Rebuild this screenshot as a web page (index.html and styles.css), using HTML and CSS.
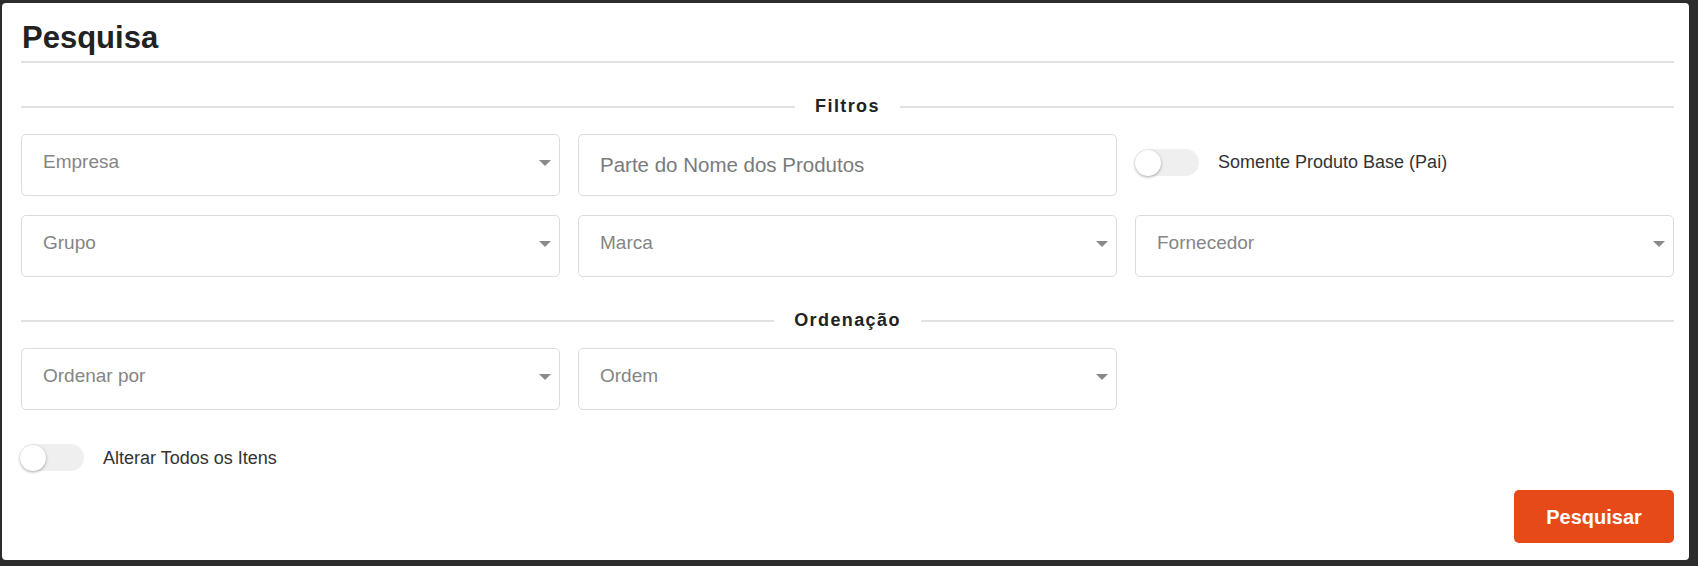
FILE: index.html
```html
<!DOCTYPE html>
<html lang="pt-BR">
<head>
<meta charset="utf-8">
<title>Pesquisa</title>
<link rel="stylesheet" href="styles.css">
</head>
<body>
<div class="card">
  <h1 class="title">Pesquisa</h1>

  <div class="divider"><span>Filtros</span></div>
  <div class="grid">
    <div class="field select"><span class="ph">Empresa</span><span class="caret"></span></div>
    <div class="field text"><span class="ph">Parte do Nome dos Produtos</span></div>
    <div class="switch-field">
      <span class="switch"><span class="knob"></span></span>
      <span class="switch-label">Somente Produto Base (Pai)</span>
    </div>
    <div class="field select"><span class="ph">Grupo</span><span class="caret"></span></div>
    <div class="field select"><span class="ph">Marca</span><span class="caret"></span></div>
    <div class="field select"><span class="ph">Fornecedor</span><span class="caret"></span></div>
  </div>

  <div class="divider"><span>Ordenação</span></div>
  <div class="grid">
    <div class="field select"><span class="ph">Ordenar por</span><span class="caret"></span></div>
    <div class="field select"><span class="ph">Ordem</span><span class="caret"></span></div>
  </div>

  <div class="switch-field standalone">
    <span class="switch"><span class="knob"></span></span>
    <span class="switch-label">Alterar Todos os Itens</span>
  </div>

  <div class="actions">
    <button class="btn-primary" type="button">Pesquisar</button>
  </div>
</div>
</body>
</html>
```

FILE: styles.css
```css
* { box-sizing: border-box; }

html, body {
  margin: 0;
  height: 100%;
}

body {
  background: #2c2c2c;
  padding: 3px 9px 0 2px;
  font-family: "Liberation Sans", Arial, sans-serif;
  color: #333;
}

.card {
  background: #fff;
  border-radius: 4px;
  padding: 15px 15px 17px 19px;
}

.title {
  margin: 0;
  font-size: 31px;
  line-height: 37px;
  font-weight: 700;
  color: #222;
  padding: 1px 0 5px 1px;
  border-bottom: 2px solid #e2e2e2;
}

.divider {
  display: flex;
  align-items: center;
  height: 22px;
  margin: 33px 0 16px;
}

.divider::before,
.divider::after {
  content: "";
  flex: 1;
  height: 2px;
  background: #e2e2e2;
}

.divider span {
  padding: 0 20px 2px;
  font-size: 18px;
  line-height: 22px;
  font-weight: 700;
  letter-spacing: 1.4px;
  color: #222;
}

.grid {
  display: grid;
  grid-template-columns: repeat(3, 1fr);
  column-gap: 18px;
  row-gap: 19px;
}

.field {
  height: 62px;
  border: 1px solid #dcdcdc;
  border-radius: 5px;
  display: flex;
  justify-content: space-between;
  padding: 0 8px 0 21px;
}

.field .ph {
  font-size: 19px;
  line-height: 22px;
  color: #858585;
}

.field.select .ph {
  padding-top: 16px;
}

.field.text {
  align-items: center;
}

.field.text .ph {
  font-size: 20.5px;
  color: #7a7a7a;
}

.caret {
  align-self: center;
  margin-bottom: 4px;
  width: 0;
  height: 0;
  border-left: 6.5px solid transparent;
  border-right: 6.5px solid transparent;
  border-top: 6.5px solid #8a8a8a;
}

.switch-field {
  display: flex;
  align-items: center;
  height: 62px;
  padding-bottom: 5px;
}

.switch {
  width: 64px;
  height: 27px;
  border-radius: 14px;
  background: #efefef;
  display: flex;
  align-items: center;
  flex-shrink: 0;
}

.knob {
  width: 26px;
  height: 26px;
  border-radius: 50%;
  background: #fff;
  box-shadow: 0 1px 3px rgba(0, 0, 0, 0.35);
}

.switch-label {
  margin-left: 19px;
  font-size: 18px;
  color: #333;
}

.switch-field.standalone {
  height: 27px;
  padding: 0;
  margin-top: 34px;
  margin-left: -1px;
}

.switch-field.standalone .switch-label {
  padding-top: 2px;
}

.actions {
  display: flex;
  justify-content: flex-end;
  margin-top: 19px;
}

.btn-primary {
  width: 160px;
  height: 53px;
  border: 0;
  border-radius: 5px;
  background: #e64a19;
  color: #fff;
  font-family: "Liberation Sans", Arial, sans-serif;
  font-size: 20px;
  font-weight: 700;
  padding-top: 2px;
  cursor: pointer;
}
```
